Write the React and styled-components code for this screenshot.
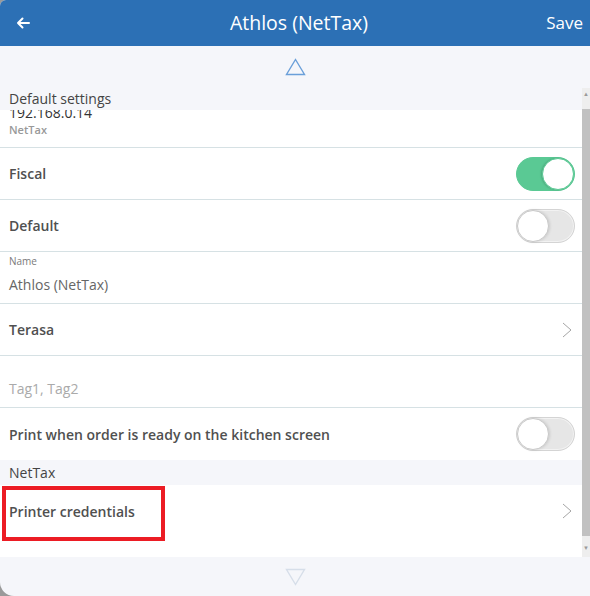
import React, { useLayoutEffect, useRef } from "react"
import styled, { createGlobalStyle } from "styled-components"

const GlobalStyle = createGlobalStyle`
  html, body {
    margin: 0;
    padding: 0;
    background: #9a9a9a;
  }
  body {
    font-family: "Open Sans", "Noto Sans", sans-serif;
  }
`

const Screen = styled.div`
  width: 590px;
  height: 596px;
  display: flex;
  flex-direction: column;
  background: #f5f6fa;
  overflow: hidden;
  border-top-left-radius: 6px;
  border-bottom-left-radius: 14px;
`

const Header = styled.header`
  height: 46px;
  flex: none;
  display: flex;
  align-items: center;
  justify-content: space-between;
  padding: 0 7px 0 16px;
  background: #2c70b5;
  color: #fff;
  position: relative;
`

const BackButton = styled.button`
  border: 0;
  background: none;
  padding: 0;
  width: 16px;
  height: 16px;
  display: flex;
  align-items: center;
  color: #fff;
`

const Title = styled.h1`
  margin: 0;
  font-size: 19.5px;
  font-weight: 400;
  line-height: 46px;
  position: absolute;
  left: 8px;
  right: 0;
  text-align: center;
  pointer-events: none;
`

const SaveButton = styled.button`
  border: 0;
  background: none;
  padding: 0;
  color: #fff;
  font-family: inherit;
  font-size: 17px;
  line-height: 46px;
`

const Pager = styled.div`
  height: ${(p) => p.$h}px;
  flex: none;
  display: flex;
  align-items: center;
  justify-content: center;
`

const ListFrame = styled.div`
  flex: 1;
  min-height: 0;
  display: flex;
`

const List = styled.div`
  flex: 1;
  overflow-y: scroll;
  background: #f5f6fa;
  scrollbar-width: none;
  &::-webkit-scrollbar {
    display: none;
  }
`

const Rail = styled.div`
  width: 8px;
  flex: none;
  display: flex;
  flex-direction: column;
  background: #eeeeee;
`

const RailArrow = styled.div`
  height: 21px;
  flex: none;
  display: flex;
  justify-content: center;
  align-items: ${(p) => (p.$up ? "flex-start" : "flex-end")};
  padding: 3px 0 6px;
  box-sizing: border-box;
  color: #9a9a9a;
  font-size: 6px;
  line-height: 6px;
`

const Thumb = styled.div`
  flex: 1;
  background: #c1c1c1;
`

const Section = styled.section`
  padding-bottom: ${(p) => p.$pad || 0}px;
  background: ${(p) => (p.$pad ? "#fff" : "transparent")};
`

const SectionTitle = styled.div`
  position: sticky;
  top: 0;
  z-index: 2;
  height: ${(p) => p.$h}px;
  line-height: ${(p) => p.$h}px;
  padding-left: 9px;
  background: #f5f6fa;
  color: #444;
  font-size: 14px;
`

const Row = styled.div`
  position: relative;
  box-sizing: border-box;
  height: 52px;
  display: flex;
  align-items: center;
  justify-content: space-between;
  padding: 0 7px 0 9px;
  background: #fff;
  border-bottom: ${(p) => (p.$last ? "0" : "1px solid #d6e1e4")};
`

const FieldRow = styled.div`
  box-sizing: border-box;
  height: 52px;
  padding: 2px 9px 0;
  background: #fff;
  border-bottom: 1px solid #d6e1e4;
`

const Label = styled.span`
  color: #505050;
  font-size: 14px;
  font-weight: 600;
`

const Ip = styled.div`
  padding-top: 5px;
  line-height: 20px;
  font-size: 14px;
  color: #333;
`

const SubLabel = styled.div`
  line-height: 14px;
  font-size: 11px;
  font-weight: 600;
  color: #999;
`

const FieldLabel = styled.div`
  height: 14px;
  line-height: 14px;
  font-size: 10px;
  color: #7a7a7a;
`

const FieldValue = styled.div`
  margin-top: 7px;
  line-height: 20px;
  font-size: 14px;
  color: ${(p) => (p.$placeholder ? "#aaaaaa" : "#666")};
`

const Track = styled.div`
  box-sizing: border-box;
  width: 59px;
  height: 34px;
  border-radius: 17px;
  border: 1px solid ${(p) => (p.$on ? "#5ac994" : "#d4d4d4")};
  background: ${(p) => (p.$on ? "#5ac994" : "#e6e6e6")};
  display: flex;
  justify-content: ${(p) => (p.$on ? "flex-end" : "flex-start")};
  box-shadow: ${(p) => (p.$on ? "none" : "inset 0 0 0 1px #f2f2f2")};
`

const Knob = styled.div`
  box-sizing: border-box;
  width: 32px;
  height: 32px;
  border-radius: 50%;
  background: #fff;
  border: 1px solid ${(p) => (p.$on ? "#5ac994" : "#c9c9c9")};
  box-shadow: ${(p) => (p.$on ? "-1px 0 2px rgba(0,0,0,0.15)" : "1px 0 3px rgba(0,0,0,0.12)")};
`

const Highlight = styled.div`
  position: absolute;
  left: 2px;
  top: 1px;
  width: 163px;
  height: 55px;
  box-sizing: border-box;
  border: 4px solid #ec1c24;
  pointer-events: none;
`

const Chevron = styled.svg`
  margin-right: 3px;
`

function Toggle({ on }) {
  return (
    <Track $on={on}>
      <Knob $on={on} />
    </Track>
  )
}

function Arrow() {
  return (
    <Chevron width="10" height="16" viewBox="0 0 10 16">
      <path d="M1 1 L9 8 L1 15" fill="none" stroke="#a5a5a5" strokeWidth="1" />
    </Chevron>
  )
}

function Triangle({ up, color }) {
  return (
    <svg width="21" height="18" viewBox="0 0 21 18">
      <path
        d={up ? "M10.5 1.5 L19.5 16.5 L1.5 16.5 Z" : "M1.5 1.5 L19.5 1.5 L10.5 16.5 Z"}
        fill="none"
        stroke={color}
        strokeWidth="1.4"
        strokeLinejoin="miter"
      />
    </svg>
  )
}

export default function App() {
  const listRef = useRef(null)

  useLayoutEffect(() => {
    if (listRef.current) listRef.current.scrollTop = listRef.current.scrollHeight
  }, [])

  return (
    <>
      <GlobalStyle />
      <Screen>
        <Header>
          <BackButton>
            <svg width="14" height="12" viewBox="0 0 14 12">
              <path d="M13 6 H2 M6.5 1.5 L2 6 L6.5 10.5" fill="none" stroke="#fff" strokeWidth="2" strokeLinecap="round" strokeLinejoin="round" />
            </svg>
          </BackButton>
          <Title>Athlos (NetTax)</Title>
          <SaveButton>Save</SaveButton>
        </Header>

        <Pager $h={42}>
          <Triangle up color="#6a9fd9" />
        </Pager>

        <ListFrame>
          <List ref={listRef}>
            <Section>
              <SectionTitle $h={22}>Default settings</SectionTitle>
              <FieldRow>
                <Ip>192.168.0.14</Ip>
                <SubLabel>NetTax</SubLabel>
              </FieldRow>
              <Row>
                <Label>Fiscal</Label>
                <Toggle on />
              </Row>
              <Row>
                <Label>Default</Label>
                <Toggle />
              </Row>
              <FieldRow>
                <FieldLabel>Name</FieldLabel>
                <FieldValue>Athlos (NetTax)</FieldValue>
              </FieldRow>
              <Row>
                <Label>Terasa</Label>
                <Arrow />
              </Row>
              <FieldRow>
                <FieldLabel />
                <FieldValue $placeholder>Tag1, Tag2</FieldValue>
              </FieldRow>
              <Row $last>
                <Label>Print when order is ready on the kitchen screen</Label>
                <Toggle />
              </Row>
            </Section>
            <Section $pad={20}>
              <SectionTitle $h={25}>NetTax</SectionTitle>
              <Row $last>
                <Label>Printer credentials</Label>
                <Arrow />
                <Highlight />
              </Row>
            </Section>
          </List>
          <Rail>
            <RailArrow $up>▲</RailArrow>
            <Thumb />
            <RailArrow>▼</RailArrow>
          </Rail>
        </ListFrame>

        <Pager $h={39}>
          <Triangle color="#d6dee9" />
        </Pager>
      </Screen>
    </>
  )
}
